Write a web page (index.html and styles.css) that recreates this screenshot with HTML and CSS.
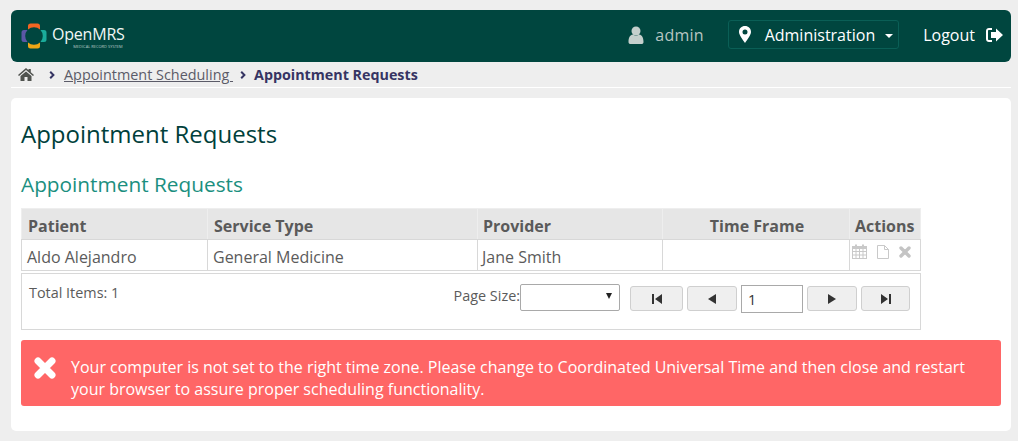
FILE: index.html
```html
<!DOCTYPE html>
<html lang="en">
<head>
    <meta charset="UTF-8">
    <title>Appointment Requests</title>
    <link rel="stylesheet" href="styles.css">
</head>
<body>

    <!-- Header -->
    <header class="topbar">
        <div class="logo">
            <svg class="logo-mark" width="26" height="26" viewBox="0 0 26 26">
                <path d="M7 6.500 V3 Q7 0.500 9.500 0.500 H16.500 Q19 0.500 19 3 V6.500 A9 9 0 0 0 7 6.500Z" fill="#f26522"/>
                <path d="M7 19.500 V23 Q7 25.500 9.500 25.500 H16.500 Q19 25.500 19 23 V19.500 A9 9 0 0 1 7 19.500Z" fill="#eea616"/>
                <path d="M6.500 7 H3 Q0.500 7 0.500 9.500 V16.500 Q0.500 19 3 19 H6.500 A9 9 0 0 1 6.500 7Z" fill="#5b57a6"/>
                <path d="M19.500 7 H23 Q25.500 7 25.500 9.500 V16.500 Q25.500 19 23 19 H19.500 A9 9 0 0 0 19.500 7Z" fill="#1aac9b"/>
            </svg>
            <div class="logo-text">
                <span class="logo-name">OpenMRS</span>
                <span class="logo-sub">MEDICAL RECORD SYSTEM</span>
            </div>
        </div>
        <nav class="topnav">
            <span class="user">
                <svg width="16" height="18" viewBox="0 0 16 18"><circle cx="8" cy="5" r="4.500" fill="#c4cfcc"/><path d="M0.500 16 C0.500 11 2.500 9 4.500 8.500 C6.500 10 9.500 10 11.500 8.500 C13.500 9 15.500 11 15.500 16 C15.500 17.500 14.500 18 13.500 18 L2.500 18 C1.500 18 0.500 17.500 0.500 16Z" fill="#c4cfcc"/></svg>
                admin
            </span>
            <span class="location">
                <svg width="12" height="17" viewBox="0 0 12 17"><path fill-rule="evenodd" d="M6 0 C9.500 0 12 2.500 12 6 C12 9 8 14 6 17 C4 14 0 9 0 6 C0 2.500 2.500 0 6 0Z M6 3.500 A2.500 2.500 0 1 0 6 8.500 A2.500 2.500 0 1 0 6 3.500Z" fill="#fff"/></svg>
                <span class="location-name">Administration</span>
                <span class="caret"></span>
            </span>
            <span class="logout">
                Logout
                <svg width="17" height="14" viewBox="0 0 17 14"><path d="M6 0 L6 2 L3 2 C2.400 2 2 2.400 2 3 L2 11 C2 11.600 2.400 12 3 12 L6 12 L6 14 L3 14 C1.300 14 0 12.700 0 11 L0 3 C0 1.300 1.300 0 3 0Z" fill="#fff"/><path d="M10 0.500 L17 7 L10 13.500 L10 10 L5 10 L5 4 L10 4Z" fill="#fff"/></svg>
            </span>
        </nav>
    </header>

    <!-- Breadcrumbs -->
    <div class="breadcrumbs">
        <svg class="home" width="16" height="13" viewBox="0 0 16 13"><path d="M8 0 L10.500 2.200 L10.500 1 L12.800 1 L12.800 4.200 L16 7 L15 8 L8 2 L1 8 L0 7Z" fill="#50534f"/><path d="M2.500 8 L8 3.400 L13.500 8 L13.500 13 L9.500 13 L9.500 9 L6.500 9 L6.500 13 L2.500 13Z" fill="#50534f"/></svg>
        <svg class="chevron first" width="6" height="8" viewBox="0 0 6 8"><path d="M1.200 0.800 L4.400 4 L1.200 7.200" fill="none" stroke="#363463" stroke-width="2"/></svg>
        <a href="#">Appointment Scheduling&nbsp;</a>
        <svg class="chevron" width="6" height="8" viewBox="0 0 6 8"><path d="M1.200 0.800 L4.400 4 L1.200 7.200" fill="none" stroke="#363463" stroke-width="2"/></svg>
        <strong>Appointment Requests</strong>
    </div>

    <!-- Main content -->
    <main class="content">
        <h1>Appointment Requests</h1>
        <h2>Appointment Requests</h2>

        <div class="grid">
            <table>
                <thead>
                    <tr>
                        <th class="col-patient">Patient</th>
                        <th class="col-service">Service Type</th>
                        <th class="col-provider">Provider</th>
                        <th class="col-time">Time Frame</th>
                        <th class="col-actions">Actions</th>
                    </tr>
                </thead>
                <tbody>
                    <tr>
                        <td>Aldo Alejandro</td>
                        <td>General Medicine</td>
                        <td class="cell-provider">Jane Smith</td>
                        <td></td>
                        <td class="actions">
                            <svg width="15" height="15" viewBox="0 0 15 15"><path fill-rule="evenodd" d="M0 2 H3 V0.500 H5 V2 H10 V0.500 H12 V2 H15 V15 H0Z M1 5 V7 H3.500 V5Z M4.500 5 V7 H7 V5Z M8 5 V7 H10.500 V5Z M11.500 5 V7 H14 V5Z M1 8 V10.500 H3.500 V8Z M4.500 8 V10.500 H7 V8Z M8 8 V10.500 H10.500 V8Z M11.500 8 V10.500 H14 V8Z M1 11.500 V14 H3.500 V11.500Z M4.500 11.500 V14 H7 V11.500Z M8 11.500 V14 H10.500 V11.500Z M11.500 11.500 V14 H14 V11.500Z" fill="#c9c9c9"/></svg>
                            <svg class="icon-file" width="12" height="14" viewBox="0 0 12 14"><path d="M1 0.500 H7.500 L11.500 4.500 V13.500 H0.500 V0.500Z M7.500 0.500 V4.500 H11.500" fill="none" stroke="#c9c9c9"/></svg>
                            <svg class="icon-remove" width="12" height="12" viewBox="0 0 12 12"><path d="M2 2 L10 10 M10 2 L2 10" stroke="#c4c4c4" stroke-width="3.400" stroke-linecap="round"/></svg>
                        </td>
                    </tr>
                </tbody>
            </table>

            <div class="pager">
                <span class="total">Total Items: 1</span>
                <div class="pager-right">
                    <label class="page-size"><span class="page-size-label">Page Size:</span><span class="select-wrap"><select><option></option></select><span class="select-arrow"></span></span></label>
                    <div class="pager-btns">
                        <button type="button"><svg width="12" height="10" viewBox="0 0 12 10"><path d="M1 0 H3 V10 H1Z M11 0 V10 L4 5Z" fill="#333"/></svg></button>
                        <button type="button" class="btn-step"><svg width="8" height="10" viewBox="0 0 8 10"><path d="M8 0 V10 L0 5Z" fill="#333"/></svg></button>
                        <input type="text" value="1">
                        <button type="button" class="btn-step"><svg width="8" height="10" viewBox="0 0 8 10"><path d="M0 0 V10 L8 5Z" fill="#333"/></svg></button>
                        <button type="button" class="btn-last"><svg width="12" height="10" viewBox="0 0 12 10"><path d="M1 0 V10 L8 5Z M9 0 H11 V10 H9Z" fill="#333"/></svg></button>
                    </div>
                </div>
            </div>
        </div>

        <div class="alert">
            <svg width="24" height="24" viewBox="0 0 24 24"><path d="M5 5 L19 19 M19 5 L5 19" stroke="#fff" stroke-width="7" stroke-linecap="round"/></svg>
            <p>Your computer is not set to the right time zone. Please change to Coordinated Universal Time and then close and restart your browser to assure proper scheduling functionality.</p>
        </div>
    </main>

</body>
</html>
```

FILE: styles.css
```css
body {
    font-family: 'Open Sans', sans-serif;
    background-color: #eeeeee;
    color: #363463;
    margin: 0;
    padding: 10px 7px 10px 11px;
    height: 421px;
    overflow: hidden;
}

/* Header */
.topbar {
    display: flex;
    justify-content: space-between;
    align-items: center;
    height: 52px;
    box-sizing: border-box;
    background-color: #00463f;
    border-radius: 6px;
    padding: 0 8px 3px 10px;
}

.logo {
    display: flex;
    align-items: center;
    gap: 5px;
    margin-top: 3px;
}

.logo-text {
    display: flex;
    flex-direction: column;
    color: #f2f7f6;
}

.logo-name {
    font-size: 16px;
    line-height: 20px;
    letter-spacing: -0.2px;
}

.logo-sub {
    font-size: 4px;
    line-height: 5px;
    align-self: flex-end;
    margin-right: 2px;
    color: #b9cbc8;
}

.topnav {
    display: flex;
    align-items: center;
    font-size: 16px;
    color: #fff;
}

.user {
    display: flex;
    align-items: center;
    gap: 11px;
    color: #b7c5c2;
    letter-spacing: 0.2px;
    margin-right: 24px;
}

.location {
    display: flex;
    align-items: center;
    height: 27px;
    padding: 0 5px 0 10px;
    border: 1px solid #0a5f56;
    border-radius: 3px;
    margin-right: 24px;
}

.location-name {
    margin-left: 14px;
}

.caret {
    width: 0;
    height: 0;
    margin-left: 10px;
    margin-top: 3px;
    border-left: 4px solid transparent;
    border-right: 4px solid transparent;
    border-top: 4px solid #fff;
}

.logout {
    display: flex;
    align-items: center;
    gap: 11px;
}

/* Breadcrumbs */
.breadcrumbs {
    display: flex;
    align-items: center;
    height: 25px;
    padding-left: 7px;
    border-bottom: 1px solid #fff;
    font-size: 14.400px;
}

.breadcrumbs a {
    color: #5b5b68;
}

.breadcrumbs strong {
    font-size: 14.300px;
    font-weight: 700;
    margin-left: 1px;
}

.chevron {
    margin: 1px 7px 0;
}

.chevron.first {
    margin: 1px 9px 0 15px;
}

/* Main content */
.content {
    background-color: #fff;
    border-radius: 5px;
    margin-top: 10px;
    height: 333px;
    padding: 0 10px;
    box-sizing: border-box;
    overflow: hidden;
}

h1 {
    font-size: 24px;
    font-weight: 400;
    line-height: 32px;
    color: #003f3b;
    margin: 20px 0 0;
}

h2 {
    font-size: 20.800px;
    font-weight: 400;
    line-height: 28px;
    color: #1b8f7f;
    margin: 20px 0 10px;
}

.grid {
    width: 900px;
    color: #5b5b5b;
}

table {
    width: 899px;
    table-layout: fixed;
    border-collapse: collapse;
    border: 1px solid #d8d8d8;
    font-size: 16px;
}

th {
    height: 31px;
    box-sizing: border-box;
    background-color: #e6e6e6;
    border: 1px solid #eeeeee;
    border-bottom: 1px solid #d8d8d8;
    padding: 4px 0 0 6px;
    text-align: left;
    font-weight: 700;
    color: #5a5a5a;
}

td {
    height: 31px;
    box-sizing: border-box;
    border: 1px solid #d8d8d8;
    padding: 4px 0 0 5px;
    color: #5b5b5b;
}

.col-patient { width: 186px; }
.col-service { width: 270px; }
.col-provider { width: 185px; padding-left: 5px; }
.col-time { width: 187px; text-align: center; padding-left: 2px; }
.col-actions { width: 71px; padding-left: 5px; }

td.cell-provider {
    padding-left: 4px;
}

td.actions {
    vertical-align: top;
    padding: 4px 0 0 2px;
    line-height: 15px;
}

.actions svg {
    margin-right: 6px;
    vertical-align: top;
}

.actions .icon-file {
    margin-top: 1px;
}

.actions .icon-remove {
    margin-top: 2px;
}

.pager {
    display: flex;
    justify-content: space-between;
    height: 57px;
    margin-top: 2px;
    border: 1px solid #d8d8d8;
    box-sizing: border-box;
    padding: 11px 10px 0 7px;
    font-size: 14.400px;
}

.total {
    line-height: 16px;
}

.pager-right {
    display: flex;
    align-items: flex-start;
}

.page-size {
    display: flex;
    align-items: center;
    height: 27px;
    margin-top: -1px;
}

.page-size-label {
    margin-bottom: 4px;
}

.select-wrap {
    position: relative;
    display: block;
    height: 27px;
}

.page-size select {
    display: block;
    width: 100px;
    height: 27px;
    appearance: none;
    background-color: #fff;
    border: 1px solid #a9a9a9;
    border-radius: 2px;
    box-sizing: border-box;
}

.select-arrow {
    position: absolute;
    right: 8px;
    top: 9px;
    width: 0;
    height: 0;
    border-left: 3px solid transparent;
    border-right: 3px solid transparent;
    border-top: 6px solid #222;
}

.pager-btns {
    display: flex;
    gap: 4px;
    margin-left: 10px;
    margin-top: 1px;
}

.pager-btns button {
    width: 53px;
    height: 25px;
    background-color: #efefef;
    border: 1px solid #cfcfcf;
    border-radius: 3px;
    padding: 0;
    display: flex;
    align-items: center;
    justify-content: center;
}

.pager-btns .btn-step {
    width: 50px;
}

.pager-btns .btn-last {
    width: 49px;
}

.pager-btns input {
    width: 62px;
    height: 28px;
    margin-top: -1px;
    box-sizing: border-box;
    border: 1px solid #a9a9a9;
    padding: 0 0 0 6px;
    font-family: 'Open Sans', sans-serif;
    font-size: 14.400px;
    color: #333;
}

/* Alert */
.alert {
    display: flex;
    align-items: flex-start;
    height: 66px;
    box-sizing: border-box;
    margin-top: 10px;
    padding: 16px 20px 0 12px;
    background-color: #ff6666;
    border-radius: 3px;
    color: #fff;
    font-size: 16px;
    line-height: 22px;
}

.alert svg {
    flex-shrink: 0;
    margin-right: 14px;
}

.alert p {
    margin: 0;
}
```
